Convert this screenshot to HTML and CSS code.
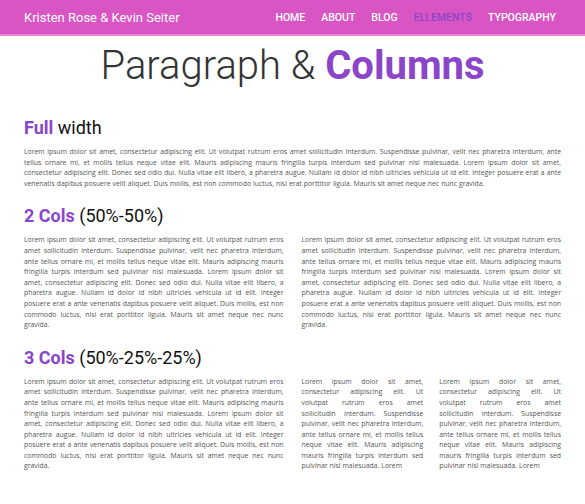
FILE: index.html
```html
<!DOCTYPE html>
<html>
<head>
<meta charset="utf-8">
<link rel="stylesheet" href="styles.css">
</head>
<body>
<header class="topbar">
  <div class="brand">Kristen Rose &amp; Kevin Seiter</div>
  <nav class="nav">
    <a>HOME</a><a>ABOUT</a><a>BLOG</a><a class="active">ELLEMENTS</a><a>TYPOGRAPHY</a>
  </nav>
</header>
<main class="content">
  <h1 class="title">Paragraph &amp; <b>Columns</b></h1>

  <h2 class="sect"><b>Full</b> width</h2>
  <p class="txt">Lorem ipsum dolor sit amet, consectetur adipiscing elit. Ut volutpat rutrum eros amet sollicitudin interdum. Suspendisse pulvinar, velit nec pharetra interdum, ante tellus ornare mi, et mollis tellus neque vitae elit. Mauris adipiscing mauris fringilla turpis interdum sed pulvinar nisi malesuada. Lorem ipsum dolor sit amet, consectetur adipiscing elit. Donec sed odio dui. Nulla vitae elit libero, a pharetra augue. Nullam id dolor id nibh ultricies vehicula ut id elit. Integer posuere erat a ante venenatis dapibus posuere velit aliquet. Duis mollis, est non commodo luctus, nisi erat porttitor ligula. Mauris sit amet neque nec nunc gravida.</p>

  <h2 class="sect"><b>2 Cols</b> (50%-50%)</h2>
  <div class="cols">
    <p class="txt">Lorem ipsum dolor sit amet, consectetur adipiscing elit. Ut volutpat rutrum eros amet sollicitudin interdum. Suspendisse pulvinar, velit nec pharetra interdum, ante tellus ornare mi, et mollis tellus neque vitae elit. Mauris adipiscing mauris fringilla turpis interdum sed pulvinar nisi malesuada. Lorem ipsum dolor sit amet, consectetur adipiscing elit. Donec sed odio dui. Nulla vitae elit libero, a pharetra augue. Nullam id dolor id nibh ultricies vehicula ut id elit. Integer posuere erat a ante venenatis dapibus posuere velit aliquet. Duis mollis, est non commodo luctus, nisi erat porttitor ligula. Mauris sit amet neque nec nunc gravida.</p>
    <p class="txt">Lorem ipsum dolor sit amet, consectetur adipiscing elit. Ut volutpat rutrum eros amet sollicitudin interdum. Suspendisse pulvinar, velit nec pharetra interdum, ante tellus ornare mi, et mollis tellus neque vitae elit. Mauris adipiscing mauris fringilla turpis interdum sed pulvinar nisi malesuada. Lorem ipsum dolor sit amet, consectetur adipiscing elit. Donec sed odio dui. Nulla vitae elit libero, a pharetra augue. Nullam id dolor id nibh ultricies vehicula ut id elit. Integer posuere erat a ante venenatis dapibus posuere velit aliquet. Duis mollis, est non commodo luctus, nisi erat porttitor ligula. Mauris sit amet neque nec nunc gravida.</p>
  </div>

  <h2 class="sect"><b>3 Cols</b> (50%-25%-25%)</h2>
  <div class="cols">
    <p class="txt">Lorem ipsum dolor sit amet, consectetur adipiscing elit. Ut volutpat rutrum eros amet sollicitudin interdum. Suspendisse pulvinar, velit nec pharetra interdum, ante tellus ornare mi, et mollis tellus neque vitae elit. Mauris adipiscing mauris fringilla turpis interdum sed pulvinar nisi malesuada. Lorem ipsum dolor sit amet, consectetur adipiscing elit. Donec sed odio dui. Nulla vitae elit libero, a pharetra augue. Nullam id dolor id nibh ultricies vehicula ut id elit. Integer posuere erat a ante venenatis dapibus posuere velit aliquet. Duis mollis, est non commodo luctus, nisi erat porttitor ligula. Mauris sit amet neque nec nunc gravida.</p>
    <div class="subcols">
      <p class="txt">Lorem ipsum dolor sit amet, consectetur adipiscing elit. Ut volutpat rutrum eros amet sollicitudin interdum. Suspendisse pulvinar, velit nec pharetra interdum, ante tellus ornare mi, et mollis tellus neque vitae elit. Mauris adipiscing mauris fringilla turpis interdum sed pulvinar nisi malesuada. Lorem</p>
      <p class="txt">Lorem ipsum dolor sit amet, consectetur adipiscing elit. Ut volutpat rutrum eros amet sollicitudin interdum. Suspendisse pulvinar, velit nec pharetra interdum, ante tellus ornare mi, et mollis tellus neque vitae elit. Mauris adipiscing mauris fringilla turpis interdum sed pulvinar nisi malesuada. Lorem</p>
    </div>
  </div>
</main>
</body>
</html>
```

FILE: styles.css
```css
* { box-sizing: border-box; }
html, body { margin: 0; padding: 0; background: #fff; }
body { font-family: Roboto, "Liberation Sans", sans-serif; color: #222; }

.topbar {
  height: 36px;
  background: #d955c4;
  border-bottom: 2px solid #e887d9;
  display: flex;
  align-items: center;
  justify-content: space-between;
  padding: 0 29px 0 24px;
}
.brand { color: #fff; font-size: 13px; }
.nav { display: flex; gap: 16px; }
.nav a { color: #fff; font-size: 10.5px; font-weight: 500; text-transform: uppercase; }
.nav a.active { color: #8a45c9; }

.content { padding: 0 24px; }

.title {
  margin: 4px 0 0;
  text-align: center;
  font-size: 40px;
  font-weight: 300;
  line-height: 52px;
  color: #333;
}
.title b { font-weight: 700; color: #8a45c9; }

.sect {
  margin: 15px 0 0;
  font-size: 18px;
  font-weight: 400;
  line-height: 24px;
  color: #111;
}
.title + .sect { margin-top: 24px; }
.sect b { font-weight: 700; color: #8a45c9; }

.txt {
  margin: 7px 0 0;
  font-family: "Open Sans", sans-serif;
  font-size: 6.85px;
  word-spacing: 0.25px;
  line-height: 10.6px;
  color: #555;
  text-align: justify;
}

.cols { display: grid; grid-template-columns: 1fr 1fr; gap: 18px; }
.subcols { display: grid; grid-template-columns: 1fr 1fr; gap: 16px; }
```
